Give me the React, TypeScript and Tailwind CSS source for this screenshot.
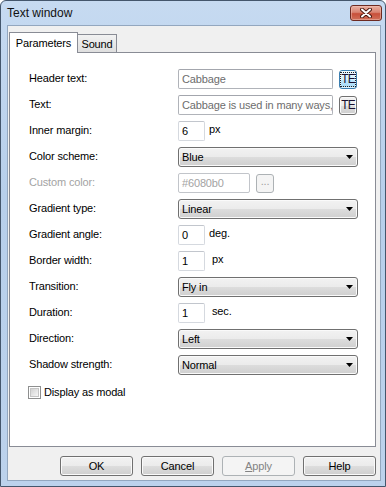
import React from 'react'

const btnBg =
  'bg-[linear-gradient(#f2f2f2_0%,#ebebeb_50%,#dddddd_50%,#cfcfcf_100%)]'

function Arrow() {
  return (
    <svg width="7" height="4" viewBox="0 0 7 4" className="shrink-0">
      <polygon points="0,0 7,0 3.5,4" fill="#000" />
    </svg>
  )
}

function Select({ value }: { value: string }) {
  return (
    <div
      className={`flex h-[20px] w-[180px] items-center justify-between rounded-[3px] border border-[#707070] pl-[3px] pr-[4px] shadow-[inset_0_0_0_1px_#fafafa] ${btnBg}`}
    >
      <span className="leading-[13px]">{value}</span>
      <Arrow />
    </div>
  )
}

function TextBox({
  value,
  width,
  tone = 'normal',
}: {
  value: string
  width: string
  tone?: 'normal' | 'muted' | 'disabled'
}) {
  const border =
    tone === 'normal'
      ? 'border-[#d5d9df] border-t-[#c2c6cd]'
      : tone === 'muted'
        ? 'border-[#b0b3b9] border-t-[#a3a6ad]'
        : 'border-[#c2c5ca]'
  const color =
    tone === 'normal' ? 'text-black' : tone === 'muted' ? 'text-[#6d6d6d]' : 'text-[#a3a3a3]'
  return (
    <div
      className={`flex h-[20px] ${width} items-center overflow-hidden rounded-[2px] border bg-white pl-[3px] ${border} ${color}`}
    >
      <span className="whitespace-nowrap leading-[13px]">{value}</span>
    </div>
  )
}

function TeButton({ focused }: { focused?: boolean }) {
  return (
    <div
      className={
        focused
          ? 'ml-[6px] flex h-[19px] w-[18px] items-center justify-center rounded-[3px] border border-[#3c7fb1] bg-[linear-gradient(#eaf6fd_0%,#d9f0fc_50%,#bee6fd_50%,#a7d9f5_100%)] shadow-[inset_0_0_0_1px_#ffffffa0]'
          : `ml-[6px] flex h-[19px] w-[18px] items-center justify-center rounded-[3px] border border-[#707070] shadow-[inset_0_0_0_1px_#fafafa] ${btnBg}`
      }
    >
      <span
        className={`flex h-[13px] w-[14px] items-center justify-center text-[12px] leading-[13px] tracking-[-1px] text-[#1a1030] ${focused ? 'outline-1 outline-dotted outline-[#222]' : ''}`}
      >
        TE
      </span>
    </div>
  )
}

function Unit({ text, gap }: { text: string; gap: string }) {
  return <span className={`${gap} self-start pt-[2px] leading-[13px]`}>{text}</span>
}

function Row({
  label,
  disabled,
  children,
}: {
  label: string
  disabled?: boolean
  children: React.ReactNode
}) {
  return (
    <div className="flex h-[20px] items-start pl-[19px]">
      <span
        className={`w-[149px] shrink-0 pt-[3px] leading-[13px] ${disabled ? 'text-[#a3a3a3]' : 'text-black'}`}
      >
        {label}
      </span>
      <div className="flex h-[20px] items-center">{children}</div>
    </div>
  )
}

function DialogButton({ children, disabled }: { children: React.ReactNode; disabled?: boolean }) {
  return (
    <div
      className={
        disabled
          ? 'flex h-[20px] w-[73px] items-center justify-center rounded-[3px] border border-[#adb2b5] bg-[#f4f4f4] text-[#838383]'
          : `flex h-[20px] w-[73px] items-center justify-center rounded-[3px] border border-[#707070] shadow-[inset_0_0_0_1px_#fafafa] ${btnBg}`
      }
    >
      <span className="leading-[13px]">{children}</span>
    </div>
  )
}

export default function App() {
  return (
    <div className="flex h-[487px] w-[386px] flex-col overflow-hidden rounded-t-[6px] border border-[#44566c] bg-[linear-gradient(#c6daf1_0%,#b7cfeb_40%,#bcd2ec_100%)] font-['Liberation_Sans',Arial,sans-serif] text-[11px] tracking-[-0.15px] text-black">
      {/* title bar */}
      <div className="flex h-[24px] shrink-0 items-start justify-between pl-[6px] pr-[3px]">
        <span className="pt-[5px] text-[12px] leading-[14px] tracking-normal text-[#111]">Text window</span>
        <div className="mt-[4px] flex h-[16px] w-[32px] items-center justify-center rounded-[3px] border border-[#6d2a21] bg-[linear-gradient(#eab0a2_0%,#d98472_45%,#c8503a_55%,#d0705a_100%)] shadow-[inset_0_0_0_1px_#f2c4b880]">
          <svg width="12" height="10" viewBox="0 0 12 10">
            <path d="M2 1.5 L10 8.5 M10 1.5 L2 8.5" stroke="#4b1a12" strokeWidth="4" strokeLinecap="round" />
            <path d="M2 1.5 L10 8.5 M10 1.5 L2 8.5" stroke="#fff" strokeWidth="2" strokeLinecap="round" />
          </svg>
        </div>
      </div>

      {/* client area */}
      <div className="ml-[6px] flex h-[456px] w-[374px] flex-col border border-[#93a7bf] bg-[#f0f0f0]">
        <div className="flex flex-col pl-[1px] pt-[6px]">
          {/* tabs */}
          <div className="flex h-[20px] items-end">
            <div className="relative z-10 -mb-px flex h-[21px] w-[69px] items-start justify-center border border-b-0 border-[#898c95] bg-white pt-[4px]">
              <span className="leading-[13px]">Parameters</span>
            </div>
            <div className="flex h-[18px] w-[39px] items-start justify-center border-r border-t border-[#898c95] bg-[linear-gradient(#f2f2f2,#dfdfdf)] pt-[3px]">
              <span className="leading-[13px]">Sound</span>
            </div>
          </div>

          {/* panel */}
          <div className="flex h-[395px] w-[367px] flex-col gap-[6px] border border-[#898c95] bg-white pt-[16px]">
            <Row label="Header text:">
              <TextBox value="Cabbage" width="w-[155px]" tone="muted" />
              <TeButton focused />
            </Row>
            <Row label="Text:">
              <TextBox value="Cabbage is used in many ways," width="w-[155px]" tone="muted" />
              <TeButton />
            </Row>
            <Row label="Inner margin:">
              <TextBox value="6" width="w-[27px]" />
              <Unit text="px" gap="ml-[4px]" />
            </Row>
            <Row label="Color scheme:">
              <Select value="Blue" />
            </Row>
            <Row label="Custom color:" disabled>
              <TextBox value="#6080b0" width="w-[72px]" tone="disabled" />
              <div className="ml-[6px] flex h-[19px] w-[18px] items-center justify-center rounded-[3px] border border-[#adb2b5] bg-[#f4f4f4] text-[#a0a0a0]">
                <span className="pb-[3px] leading-[13px]">...</span>
              </div>
            </Row>
            <Row label="Gradient type:">
              <Select value="Linear" />
            </Row>
            <Row label="Gradient angle:">
              <TextBox value="0" width="w-[27px]" />
              <Unit text="deg." gap="ml-[4px]" />
            </Row>
            <Row label="Border width:">
              <TextBox value="1" width="w-[27px]" />
              <Unit text="px" gap="ml-[7px]" />
            </Row>
            <Row label="Transition:">
              <Select value="Fly in" />
            </Row>
            <Row label="Duration:">
              <TextBox value="1" width="w-[27px]" />
              <Unit text="sec." gap="ml-[7px]" />
            </Row>
            <Row label="Direction:">
              <Select value="Left" />
            </Row>
            <Row label="Shadow strength:">
              <Select value="Normal" />
            </Row>

            <div className="mt-[5px] flex items-center pl-[18px]">
              <div className="flex h-[13px] w-[13px] items-center justify-center border border-[#8e8f8f] bg-white">
                <div className="h-[9px] w-[9px] border border-[#c5c5c5] bg-[linear-gradient(135deg,#d2d2d2,#f6f6f6)]" />
              </div>
              <span className="ml-[3px] leading-[13px]">Display as modal</span>
            </div>
          </div>

          {/* dialog buttons */}
          <div className="mt-[9px] flex w-[367px] justify-end gap-[8px]">
            <DialogButton>OK</DialogButton>
            <DialogButton>Cancel</DialogButton>
            <DialogButton disabled>
              <span className="underline">A</span>pply
            </DialogButton>
            <DialogButton>Help</DialogButton>
          </div>
        </div>
      </div>
    </div>
  )
}
